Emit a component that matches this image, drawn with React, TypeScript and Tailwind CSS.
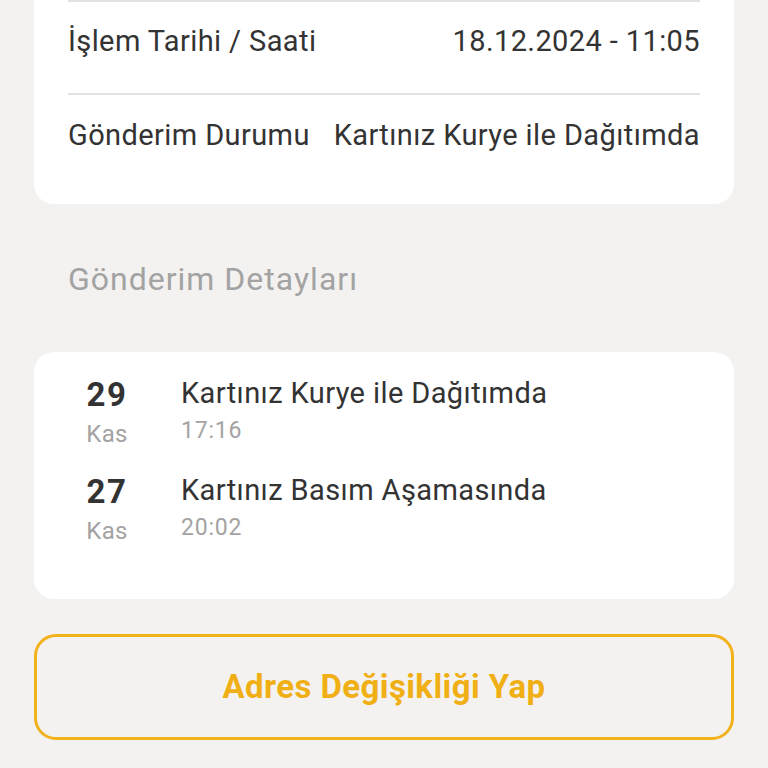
import React from "react";

const font = { fontFamily: "Roboto, 'Noto Sans', sans-serif" };

export default function App() {
  return (
    <div className="min-h-[768px] w-full bg-[#f3f2f0] px-[34px]" style={font}>
      <div className="rounded-b-[20px] bg-white px-[34px]">
        <div className="flex h-[95px] items-start justify-between border-t-2 border-b-2 border-[#e2e2e2] pt-[22px] text-[29px] leading-[34px] tracking-[0.4px] text-[#333333]">
          <span>İşlem Tarihi / Saati</span>
          <span>18.12.2024 - 11:05</span>
        </div>
        <div className="flex h-[109px] items-start justify-between pt-[23px] text-[29px] leading-[34px] tracking-[0.4px] text-[#333333]">
          <span>Gönderim Durumu</span>
          <span>Kartınız Kurye ile Dağıtımda</span>
        </div>
      </div>

      <div className="mt-[56px] px-[34px] text-[32px] leading-[38px] tracking-[1px] text-[#a3a3a3]">
        Gönderim Detayları
      </div>

      <div className="mt-[54px] flex flex-col gap-[25px] rounded-[20px] bg-white pl-[34px] pr-[34px] pt-[24px] pb-[54px]">
        {[
          { d: "29", m: "Kas", t: "Kartınız Kurye ile Dağıtımda", h: "17:16" },
          { d: "27", m: "Kas", t: "Kartınız Basım Aşamasında", h: "20:02" },
        ].map((it) => (
          <div key={it.d} className="flex items-start">
            <div className="flex w-[78px] flex-col items-center pt-[2px]">
              <span className="text-[33px] font-bold leading-[34px] tracking-[1.5px] text-[#333333]">{it.d}</span>
              <span className="mt-[8px] text-[24px] leading-[28px] tracking-[0.3px] text-[#a3a3a3]">{it.m}</span>
            </div>
            <div className="ml-[35px] flex flex-col">
              <span className="text-[29px] leading-[34px] tracking-[0.4px] text-[#333333]">{it.t}</span>
              <span className="mt-[7px] text-[23px] leading-[28px] tracking-[0.8px] text-[#a3a3a3]">{it.h}</span>
            </div>
          </div>
        ))}
      </div>

      <button className="mt-[35px] flex h-[106px] w-full items-center justify-center rounded-[22px] border-[3px] border-[#f2b21b] bg-transparent text-[33px] font-bold tracking-[0.4px] text-[#f0b015]">
        Adres Değişikliği Yap
      </button>
      <div className="h-[40px]" />
    </div>
  );
}
